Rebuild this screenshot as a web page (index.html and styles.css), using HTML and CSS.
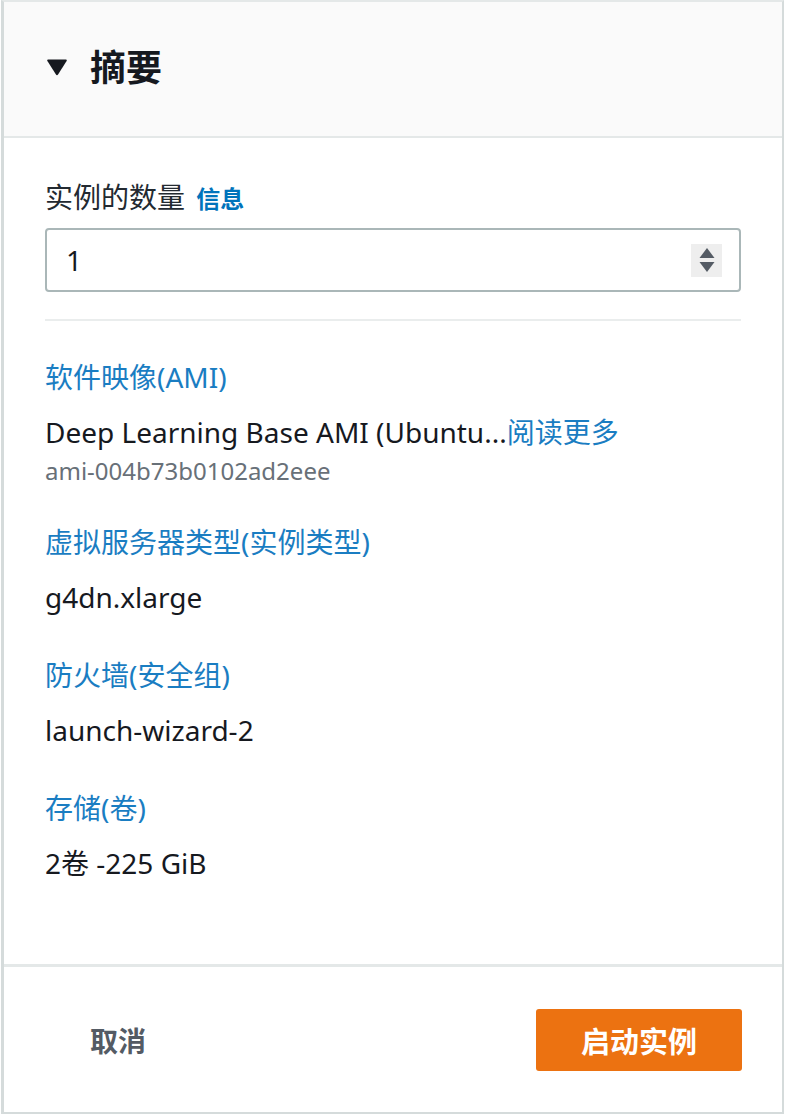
FILE: index.html
```html
<!DOCTYPE html>
<html lang="zh-CN">
<head>
    <meta charset="UTF-8">
    <meta name="viewport" content="width=device-width, initial-scale=1.0">
    <title>摘要</title>
    <link rel="stylesheet" href="styles.css">
</head>
<body>
    <div class="panel">
        <div class="panel-header">
            <svg class="caret" width="22" height="18" viewBox="0 0 22 18">
                <path d="M2 1.5 L20 1.5 Q21.5 1.5 20.6 3 L12.2 16.3 Q11 18 9.8 16.3 L1.4 3 Q0.5 1.5 2 1.5 Z" fill="#16191f"/>
            </svg>
            <h2>摘要</h2>
        </div>
        <div class="panel-body">
            <div class="field">
                <label class="field-label">实例的数量 <a class="info">信息</a></label>
                <div class="number-input">
                    <span class="value">1</span>
                    <span class="spinner">
                        <svg width="16" height="26" viewBox="0 0 16 26">
                            <path d="M8 1 L15.5 11 L0.5 11 Z" fill="#545b64"/>
                            <path d="M0.5 15 L15.5 15 L8 25 Z" fill="#545b64"/>
                        </svg>
                    </span>
                </div>
            </div>
            <div class="divider"></div>
            <dl class="summary">
                <div class="item">
                    <dt>软件映像(AMI)</dt>
                    <dd>Deep Learning Base AMI (Ubuntu...<a class="more">阅读更多</a></dd>
                    <dd class="sub">ami-004b73b0102ad2eee</dd>
                </div>
                <div class="item">
                    <dt>虚拟服务器类型(实例类型)</dt>
                    <dd>g4dn.xlarge</dd>
                </div>
                <div class="item">
                    <dt>防火墙(安全组)</dt>
                    <dd>launch-wizard-2</dd>
                </div>
                <div class="item">
                    <dt>存储(卷)</dt>
                    <dd>2卷 -225 GiB</dd>
                </div>
            </dl>
        </div>
        <div class="panel-footer">
            <button class="btn-link">取消</button>
            <button class="btn-primary">启动实例</button>
        </div>
    </div>
</body>
</html>
```

FILE: styles.css
```css
* { margin: 0; padding: 0; box-sizing: border-box; }
body {
    font-family: "Noto Sans", "Noto Sans CJK SC", sans-serif;
    background: #fff;
    color: #16191f;
    width: 785px;
    height: 1115px;
    overflow: hidden;
}
.panel {
    width: 783px;
    height: 1114px;
    margin-left: 1px;
    border: 2px solid #d5dbdb;
    border-top-color: #e4e8e8;
    border-left-width: 3px;
    display: flex;
    flex-direction: column;
}
.panel-header {
    background: #fafafa;
    height: 136px;
    border-bottom: 2px solid #e4e8e8;
    display: flex;
    align-items: center;
    padding-left: 42px;
    padding-bottom: 2px;
}
.caret {
    margin-right: 22px;
    margin-top: -2px;
}
.panel-header h2 {
    font-size: 36px;
    font-weight: 700;
    line-height: 1;
}
.panel-body {
    flex: 1;
    padding: 43px 41px 0 41px;
}
.field-label {
    display: block;
    font-size: 28px;
    line-height: 32px;
    color: #232a31;
}
.info {
    color: #0073bb;
    font-weight: 700;
    font-size: 24px;
    margin-left: 4px;
}
.number-input {
    margin-top: 13px;
    height: 64px;
    border: 2px solid #aab7b8;
    border-radius: 4px;
    display: flex;
    align-items: center;
    justify-content: space-between;
    padding: 0 17px 0 19px;
}
.number-input .value {
    font-size: 28px;
}
.spinner {
    width: 31px;
    height: 33px;
    background: #eeeeee;
    display: flex;
    align-items: center;
    justify-content: center;
}
.divider {
    height: 2px;
    background: #eaeded;
    margin-top: 27px;
}
.summary {
    margin-top: 40px;
}
.item {
    margin-bottom: 46px;
}
.item:first-child {
    margin-bottom: 44px;
}
.item dt {
    color: #1a7dc2;
    font-size: 28px;
    line-height: 32px;
}
.item dd {
    font-size: 28px;
    line-height: 32px;
    margin-top: 23px;
}
.item .more {
    color: #1a7dc2;
}
.item dd.sub {
    font-size: 24px;
    line-height: 22px;
    margin-top: 12px;
    color: #687078;
}
.panel-footer {
    height: 148px;
    border-top: 3px solid #e4e8e8;
    display: flex;
    align-items: center;
    justify-content: space-between;
    padding: 0 40px 0 44px;
}
.btn-link {
    background: none;
    border: none;
    font-family: inherit;
    font-size: 28px;
    font-weight: 700;
    color: #545b64;
    padding: 10px 42px;
}
.btn-primary {
    background: #ec7211;
    border: none;
    border-radius: 3px;
    color: #fff;
    font-family: inherit;
    font-size: 29px;
    font-weight: 700;
    width: 206px;
    height: 62px;
}
```
